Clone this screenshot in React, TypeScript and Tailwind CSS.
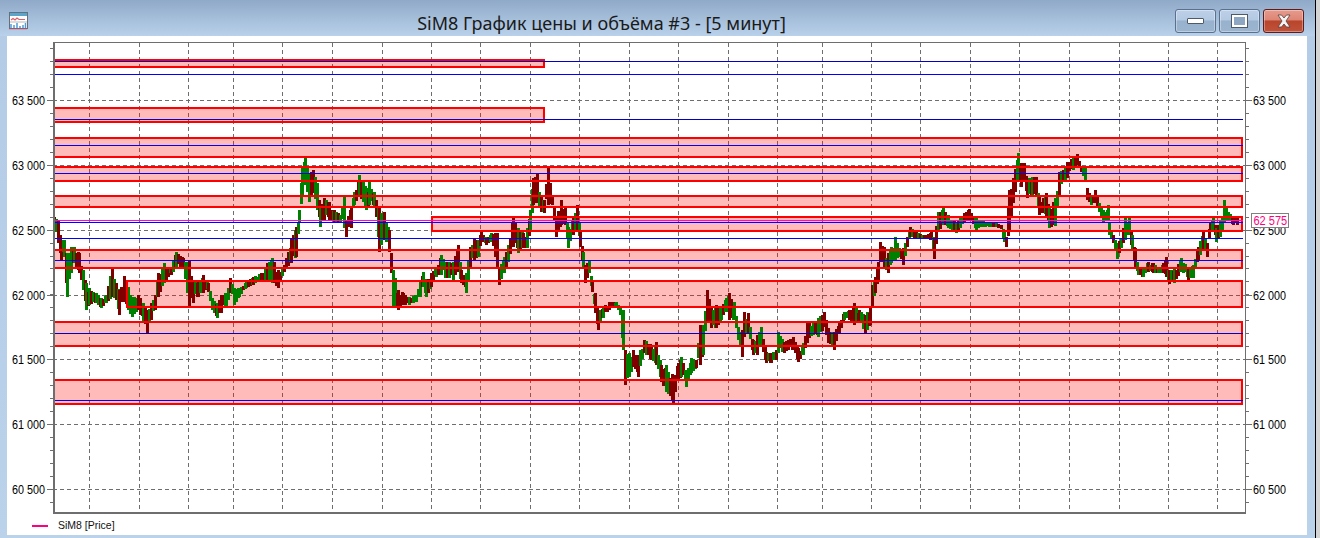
import React from "react";

// x, high, low of the price envelope, read off the chart in page pixels
const PRICE = [
  53,217,227, 57,220,243, 60,240,260, 63,240,257, 66,253,297, 70,247,273, 73,247,263, 78,253,273, 82,270,290, 85,283,310,
  88,288,305, 95,293,303, 100,298,308, 105,295,303, 111,267,297, 115,283,300, 118,290,315, 123,276,300, 127,287,310, 131,297,317,
  137,295,310, 142,303,323, 146,310,333, 150,303,320, 154,295,310, 157,273,297, 163,263,283, 170,267,275, 175,252,268, 182,258,268,
  188,260,307, 192,282,303, 197,282,297, 202,275,293, 207,283,292, 211,298,310, 216,303,318, 220,295,313, 225,293,307, 229,278,293,
  233,288,305, 238,288,297, 245,282,288, 252,277,285, 260,273,282, 266,263,280, 271,258,283, 277,270,288, 283,265,272, 290,238,263,
  295,227,257, 298,210,223, 301,168,197, 304,158,183, 308,173,202, 312,170,193, 316,183,210, 319,208,227, 323,198,220, 328,202,220,
  333,210,223, 339,215,222, 343,197,228, 345,220,237, 350,207,228, 353,192,205, 358,175,195, 365,188,210, 368,182,205, 373,192,207,
  378,208,252, 383,212,240, 388,230,252, 392,270,307, 397,290,310, 402,293,305, 408,297,305, 415,295,302, 419,280,297, 422,272,287,
  425,282,297, 430,273,287, 435,267,277, 440,255,275, 444,262,278, 448,262,278, 452,262,280, 457,245,270, 460,270,283, 465,273,293,
  469,247,267, 473,238,260, 477,240,257, 480,232,242, 485,238,245, 490,233,242, 496,233,267, 498,267,285, 503,257,273, 507,245,262,
  512,218,247, 517,228,253, 522,233,248, 526,228,248, 529,210,230, 532,178,205, 536,173,203, 540,197,212, 543,200,213, 547,168,205,
  551,195,205, 555,217,237, 560,200,225, 564,208,225, 567,227,248, 572,218,235, 576,205,230, 579,230,247, 582,252,267, 584,265,283,
  588,260,273, 591,282,292, 594,293,313, 597,310,330, 602,307,318, 608,302,310, 615,302,307, 619,307,315, 622,310,350, 624,350,385,
  628,353,377, 632,350,367, 637,355,377, 643,340,353, 650,345,360, 655,342,365, 660,365,382, 665,365,392, 672,375,403, 677,363,380,
  680,357,377, 685,373,387, 690,358,373, 695,360,368, 699,325,365, 702,325,355, 706,290,323, 710,307,328, 715,305,328, 720,308,320,
  725,298,312, 728,293,320, 733,302,320, 737,327,340, 741,330,357, 743,312,337, 747,313,333, 752,340,355, 756,335,355, 760,327,347,
  765,352,363, 770,353,363, 775,350,360, 777,332,353, 783,342,353, 787,340,350, 792,337,350, 797,348,362, 802,343,355, 806,323,343,
  812,322,335, 817,318,337, 823,312,327, 827,328,343, 833,332,350, 838,322,333, 843,312,320, 848,310,320, 853,303,325, 858,310,322,
  864,315,333, 869,307,325, 871,285,307, 874,277,293, 877,262,280, 879,242,262, 883,247,267, 887,253,273, 890,247,263, 894,237,260,
  898,248,257, 902,248,265, 906,237,247, 909,227,237, 917,233,239, 923,235,239, 930,232,240, 933,239,259, 937,212,232, 942,208,225,
  947,215,228, 955,222,233, 963,213,223, 968,209,220, 975,218,230, 982,220,227, 988,223,227, 995,223,227, 1000,225,229, 1003,230,242,
  1005,237,247, 1008,190,232, 1012,178,203, 1017,153,177, 1020,163,187, 1023,163,182, 1026,178,198, 1031,177,195, 1035,177,195, 1038,195,215,
  1042,198,213, 1045,193,217, 1048,208,228, 1052,202,225, 1054,198,226, 1058,172,195, 1062,170,182, 1066,162,178, 1072,158,170, 1076,154,165,
  1080,167,172, 1084,168,182, 1086,188,200, 1090,197,205, 1094,190,203, 1098,203,212, 1102,210,222, 1107,205,220, 1108,223,235, 1112,235,243,
  1116,243,259, 1120,238,248, 1124,218,240, 1128,218,235, 1131,235,250, 1134,248,267, 1137,267,275, 1142,268,277, 1147,262,272, 1152,263,273,
  1157,267,273, 1162,263,273, 1165,257,277, 1168,270,284, 1173,268,283, 1180,258,272, 1187,268,280, 1192,265,278, 1197,247,260, 1202,232,250,
  1206,243,257, 1209,222,232, 1212,218,230, 1215,228,242, 1219,220,237, 1223,200,223, 1227,212,220, 1232,217,225, 1238,218,225,
];

type Bar = { x: number; y: number; w: number; h: number; up: boolean };

function buildBars(): Bar[] {
  let seed = 20180;
  const rnd = () => {
    seed = (seed * 16807) % 2147483647;
    return seed / 2147483647;
  };
  const bars: Bar[] = [];
  for (let i = 0; i < PRICE.length - 3; i += 3) {
    const [x0, hi0, lo0, x1, hi1, lo1] = PRICE.slice(i, i + 6);
    // bar on the traced point keeps the spikes, the ones after it fill the gap
    bars.push({ x: x0, y: hi0, w: 3, h: lo0 - hi0, up: rnd() > 0.5 });
    for (let x = x0 + 2; x < x1; x += 2) {
      const t = (x - x0) / (x1 - x0);
      const hi = hi0 + (hi1 - hi0) * t;
      const lo = lo0 + (lo1 - lo0) * t;
      const span = lo - hi;
      const h = span * (0.6 + rnd() * 0.4);
      bars.push({ x, y: Math.round(hi + (span - h) * rnd()), w: 3, h: Math.max(3, Math.round(h)), up: rnd() > 0.5 });
    }
  }
  return bars;
}

const BARS = buildBars();

const GRID_X = [89, 139, 188, 233, 282, 332, 382, 431, 480, 530, 579, 629, 678, 728, 777, 822, 871, 920, 970, 1019, 1069, 1119, 1168, 1217];
const LEVELS = [
  { y: 100, label: "63 500" },
  { y: 165, label: "63 000" },
  { y: 230, label: "62 500" },
  { y: 295, label: "62 000" },
  { y: 359, label: "61 500" },
  { y: 424, label: "61 000" },
  { y: 489, label: "60 500" },
];
const TICKS = Array.from({ length: 36 }, (_, i) => 48 + i * 12.97).map(Math.round);

const BANDS = [
  { x: 53, r: 544, t: 60, b: 67 },
  { x: 53, r: 544, t: 108, b: 122 },
  { x: 53, r: 1242, t: 138, b: 157 },
  { x: 53, r: 1242, t: 167, b: 181 },
  { x: 53, r: 1242, t: 196, b: 207 },
  { x: 432, r: 1242, t: 217, b: 231 },
  { x: 53, r: 1242, t: 250, b: 268 },
  { x: 127, r: 1242, t: 281, b: 307 },
  { x: 53, r: 1242, t: 322, b: 346 },
  { x: 53, r: 1242, t: 380, b: 404 },
];

const BLUE = [
  { y: 61, c: "#0000c8" },
  { y: 74, c: "#0000ff" },
  { y: 119, c: "#0000c8" },
  { y: 145, c: "#0000ff" },
  { y: 173, c: "#0000ff" },
  { y: 222, c: "#0000ff" },
  { y: 238, c: "#0000ff" },
  { y: 260, c: "#0000ff" },
  { y: 333, c: "#0000c8" },
  { y: 400, c: "#0000ff" },
];

function Chart() {
  return (
    <svg width={1300} height={480} viewBox="7 36 1300 480" shapeRendering="crispEdges" className="block">
      {/* grid */}
      {GRID_X.map((x) => (
        <line key={x} x1={x + 0.5} x2={x + 0.5} y1={43} y2={513} stroke="#6e6e6e" strokeDasharray="4 3" />
      ))}
      {LEVELS.map((l) => (
        <line key={l.y} x1={53} x2={1245} y1={l.y + 0.5} y2={l.y + 0.5} stroke="#6e6e6e" strokeDasharray="4 3" />
      ))}

      {/* band fills */}
      {BANDS.map((b) => (
        <rect key={b.t} x={b.x} y={b.t} width={b.r - b.x} height={b.b - b.t} fill="#ff0000" fillOpacity={0.27} />
      ))}

      {/* price bars */}
      {BARS.map((b, i) => (
        <rect key={i} x={b.x} y={b.y} width={b.w} height={b.h} fill={b.up ? "#008000" : "#800000"} />
      ))}

      {/* band outlines, the ones starting on the axis have no left side */}
      {BANDS.map((b) => (
        <path
          key={b.t}
          d={`M${b.x} ${b.t}H${b.r}V${b.b}H${b.x}${b.x > 53 ? "Z" : ""}`}
          fill="none"
          stroke="#ff0000"
          strokeWidth={2}
        />
      ))}

      {/* levels */}
      {BLUE.map((l) => (
        <line key={l.y} x1={53} x2={1243} y1={l.y + 0.5} y2={l.y + 0.5} stroke={l.c} />
      ))}
      <line x1={53} x2={1243} y1={220.5} y2={220.5} stroke="#ff00ff" />

      {/* axes */}
      <rect x={53} y={42} width={2} height={471} fill="#6e6e6e" />
      <rect x={53} y={42} width={1193} height={1} fill="#6e6e6e" />
      <rect x={53} y={512} width={1193} height={2} fill="#6e6e6e" />
      <rect x={1245} y={42} width={1} height={471} fill="#6e6e6e" />
      {TICKS.filter((y) => y < 513).map((y) => (
        <g key={y}>
          <rect x={50} y={y} width={3} height={1} fill="#6e6e6e" />
          <rect x={1246} y={y} width={3} height={1} fill="#6e6e6e" />
        </g>
      ))}
      {LEVELS.map((l) => (
        <g key={l.y}>
          <rect x={47} y={l.y} width={6} height={1} fill="#6e6e6e" />
          <rect x={1246} y={l.y} width={6} height={1} fill="#6e6e6e" />
          <text x={12} y={l.y + 5} textLength={33} lengthAdjust="spacingAndGlyphs" fontSize={12} fill="#000" fontFamily="Liberation Sans, sans-serif">
            {l.label}
          </text>
          <text x={1253} y={l.y + 5} textLength={33} lengthAdjust="spacingAndGlyphs" fontSize={12} fill="#000" fontFamily="Liberation Sans, sans-serif">
            {l.label}
          </text>
        </g>
      ))}
    </svg>
  );
}

function AppIcon() {
  return (
    <svg width={19} height={18} viewBox="0 0 19 18" className="mt-[6px] block">
      <rect x={0.5} y={0.5} width={18} height={16} fill="#fff" stroke="#66707c" />
      <rect x={1} y={1} width={17} height={3} fill="#5aa5cc" />
      <path d="M2 8l2-1.5 2 1.5 2-2 2 1.5h6" fill="none" stroke="#e0606a" strokeWidth={1.2} />
      <rect x={1} y={9.5} width={17} height={1} fill="#b8b8b8" />
      <path d="M2 16v-4M5 16v-3M8 16v-5M11 16v-2M14 16v-3M16.5 16v-5" stroke="#4f9ad8" strokeWidth={1.5} />
      <rect x={0} y={17} width={18} height={1} fill="#f48fb1" />
    </svg>
  );
}

function WindowButtons() {
  const base = "flex h-[24px] items-center justify-center rounded-[3px] border shadow-[inset_0_0_0_1px_rgba(255,255,255,0.35)]";
  const blue = "border-[#5a708c] bg-[linear-gradient(#bcd0e8_0%,#b4c9e2_45%,#98b1cc_50%,#9bb5d0_100%)]";
  return (
    <div className="flex items-center gap-[3px]">
      <div className={`${base} ${blue} w-[41px]`}>
        <div className="h-[6px] w-[17px] rounded-[1px] border border-[#4e5a68] bg-white" />
      </div>
      <div className={`${base} ${blue} w-[41px]`}>
        <div className="h-[12px] w-[15px] border-2 border-white bg-[#8da6c2] outline outline-1 outline-[#4e5a68]" />
      </div>
      <div className={`${base} w-[41px] border-[#5e1c1c] bg-[linear-gradient(#e79a8c_0%,#dd8575_45%,#b8452c_50%,#c0533a_100%)]`}>
        <svg width={18} height={14} viewBox="0 0 18 14">
          <path d="M3 1h3.5L9 4l2.5-3H15l-4 6 4 6h-3.5L9 10l-2.5 3H3l4-6z" fill="#f4f4f4" stroke="#55403c" strokeWidth={0.8} />
        </svg>
      </div>
    </div>
  );
}

export default function App() {
  return (
    <div className="flex h-[538px] w-[1320px] overflow-hidden bg-[#d4d4d4]">
      <div className="flex w-[1315px] flex-col">
        {/* Title bar */}
        <div className="flex h-[36px] items-center bg-[linear-gradient(#8fa9c8,#b9d1ea)] pl-[9px] pr-[11px]">
          <AppIcon />
          <div className="flex-1 pt-[10px] text-center font-['Noto_Sans',sans-serif] text-[18px] leading-[28px] text-[#1a1a1a]">
            SiM8 График цены и объёма #3 - [5 минут]
          </div>
          <div className="mt-[6px]">
            <WindowButtons />
          </div>
        </div>

        {/* Window body */}
        <div className="flex flex-1 bg-[linear-gradient(#b4cce6,#bad2ea)] px-[7px] pr-[8px]">
          <div className="relative mb-[3px] flex flex-1 flex-col bg-white">
            <Chart />
            <div className="absolute left-[1244px] top-[177px] flex h-[15px] w-[38px] items-center justify-center whitespace-nowrap border border-[#808080] bg-white font-['Liberation_Sans',sans-serif] text-[12px] leading-none text-[#ff0080]">
              <span className="inline-block scale-x-[0.92]">62 575</span>
            </div>
            <div className="flex flex-1 items-center gap-[10px] pl-[25px] font-['Liberation_Sans',sans-serif] text-[10.5px] text-[#111]">
              <div className="h-[2px] w-[16px] bg-[#ff0080]" />
              <span>SiM8 [Price]</span>
            </div>
          </div>
        </div>
      </div>
      <div className="w-[1px] bg-black" />
    </div>
  );
}
